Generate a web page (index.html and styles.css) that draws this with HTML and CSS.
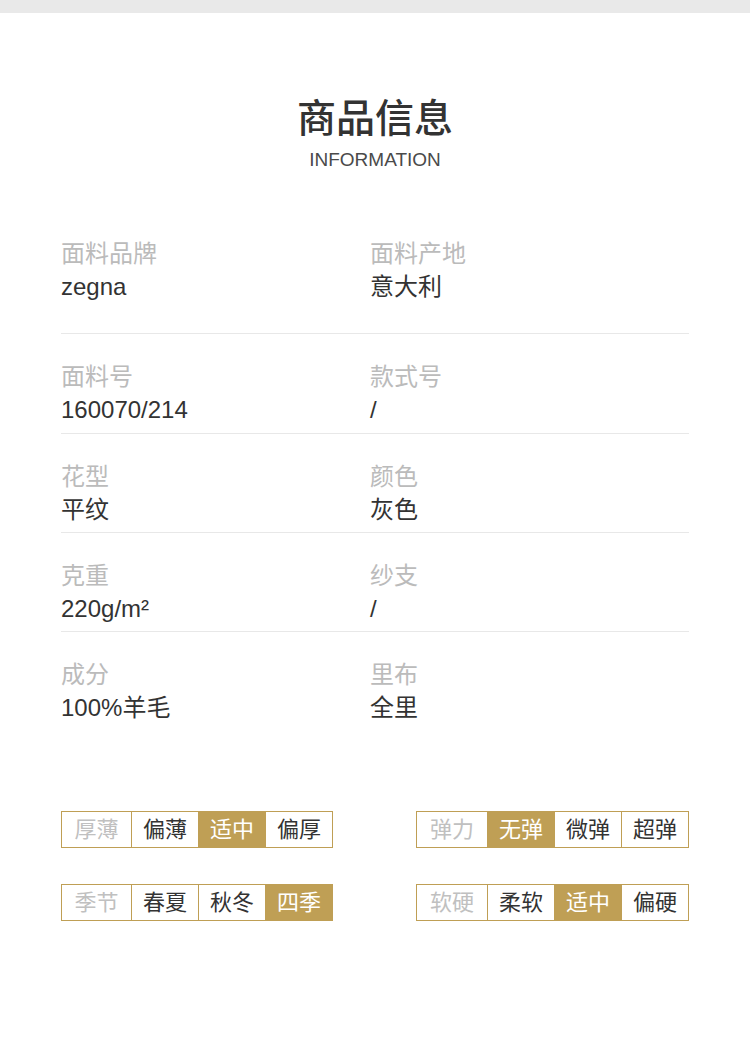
FILE: index.html
```html
<!DOCTYPE html>
<html lang="zh-CN">
<head>
<meta charset="utf-8">
<title>商品信息</title>
<link rel="stylesheet" href="styles.css">
</head>
<body>
<div class="topbar"></div>
<main class="page">
  <header class="heading">
    <h1 class="title">商品信息</h1>
    <p class="subtitle">INFORMATION</p>
  </header>

  <section class="info">
    <div class="info-row info-row--first">
      <div class="cell"><div class="label">面料品牌</div><div class="value">zegna</div></div>
      <div class="cell"><div class="label">面料产地</div><div class="value">意大利</div></div>
    </div>
    <div class="info-row">
      <div class="cell"><div class="label">面料号</div><div class="value">160070/214</div></div>
      <div class="cell"><div class="label">款式号</div><div class="value">/</div></div>
    </div>
    <div class="info-row">
      <div class="cell"><div class="label">花型</div><div class="value">平纹</div></div>
      <div class="cell"><div class="label">颜色</div><div class="value">灰色</div></div>
    </div>
    <div class="info-row">
      <div class="cell"><div class="label">克重</div><div class="value">220g/m²</div></div>
      <div class="cell"><div class="label">纱支</div><div class="value">/</div></div>
    </div>
    <div class="info-row info-row--last">
      <div class="cell"><div class="label">成分</div><div class="value">100%羊毛</div></div>
      <div class="cell"><div class="label">里布</div><div class="value">全里</div></div>
    </div>
  </section>

  <section class="tags">
    <div class="tag-line">
      <div class="tag-group">
        <span class="tag tag--label">厚薄</span>
        <span class="tag">偏薄</span>
        <span class="tag tag--on">适中</span>
        <span class="tag">偏厚</span>
      </div>
      <div class="tag-group">
        <span class="tag tag--label">弹力</span>
        <span class="tag tag--on">无弹</span>
        <span class="tag">微弹</span>
        <span class="tag">超弹</span>
      </div>
    </div>
    <div class="tag-line">
      <div class="tag-group">
        <span class="tag tag--label">季节</span>
        <span class="tag">春夏</span>
        <span class="tag">秋冬</span>
        <span class="tag tag--on">四季</span>
      </div>
      <div class="tag-group">
        <span class="tag tag--label">软硬</span>
        <span class="tag">柔软</span>
        <span class="tag tag--on">适中</span>
        <span class="tag">偏硬</span>
      </div>
    </div>
  </section>
</main>
</body>
</html>
```

FILE: styles.css
```css
* {
  box-sizing: border-box;
}

html, body {
  margin: 0;
  padding: 0;
  background: #ffffff;
}

body {
  font-family: "Liberation Sans", "Noto Sans CJK SC", sans-serif;
  color: #333333;
}

.topbar {
  height: 13px;
  background: #e9e9e9;
}

.page {
  padding: 0 61px;
}

.heading {
  text-align: center;
  padding-top: 81px;
}

.title {
  margin: 0;
  font-family: "Noto Sans CJK SC", sans-serif;
  font-size: 39px;
  line-height: 42px;
  font-weight: 500;
  color: #333333;
}

.subtitle {
  margin: 13px 0 0;
  font-size: 19px;
  line-height: 22px;
  color: #4a4a4a;
  font-weight: 400;
}

.info {
  margin-top: 69px;
}

.info-row {
  display: grid;
  grid-template-columns: 309px 1fr;
  padding: 29px 0 9px;
  border-bottom: 1px solid #e8e8e8;
}

.info-row--first {
  padding-top: 0;
  padding-bottom: 32px;
}

.info-row:nth-child(3),
.info-row:nth-child(4) {
  padding-bottom: 8px;
}

.info-row--last {
  border-bottom: none;
}

.label {
  font-size: 24px;
  line-height: 28px;
  color: #bbbbbb;
}

.value {
  margin-top: 5px;
  font-size: 24px;
  line-height: 28px;
  color: #333333;
}

.tags {
  margin-top: 80px;
  display: flex;
  flex-direction: column;
  gap: 36px;
}

.tag-line {
  display: flex;
  justify-content: space-between;
}

.tag-group {
  display: flex;
  border: 1px solid #bf9f55;
}

.tag {
  width: 67px;
  height: 35px;
  line-height: 35px;
  text-align: center;
  font-size: 22px;
  color: #333333;
  border-left: 1px solid #bf9f55;
}

.tag--label {
  width: 69px;
  border-left: none;
  color: #c0c0c0;
}

.tag-group + .tag-group .tag--label {
  width: 70px;
}

.tag--on {
  background: #bf9f55;
  color: #ffffff;
}
```
